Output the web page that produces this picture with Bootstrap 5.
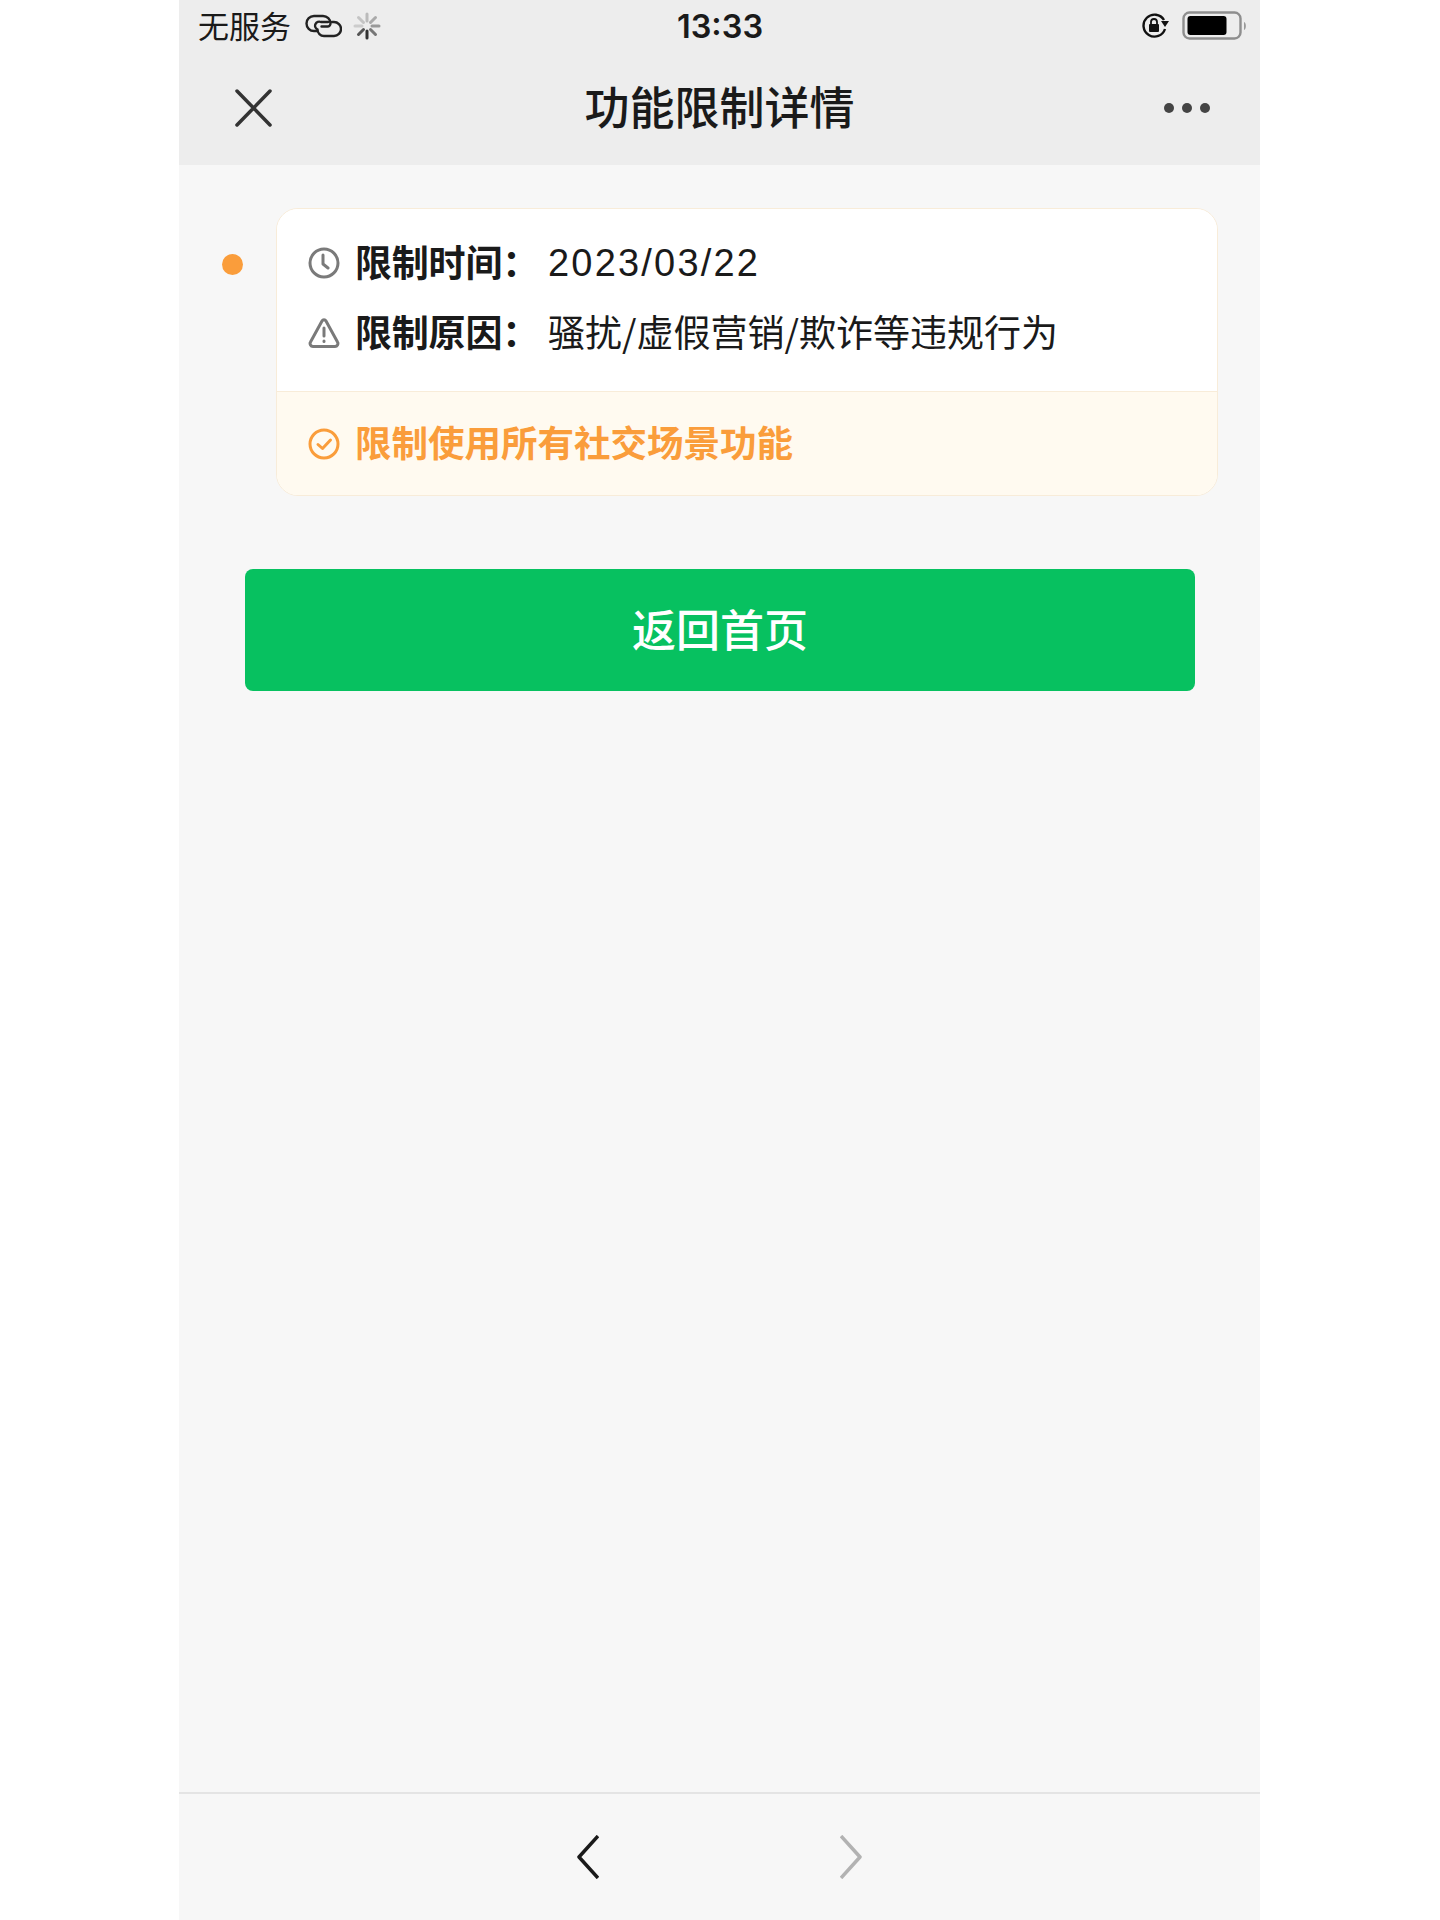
<!DOCTYPE html>
<html lang="zh-CN">
<head>
  <meta charset="UTF-8" />
  <meta name="viewport" content="width=device-width, initial-scale=1.0"/>
  <title>功能限制详情</title>
  <link href="https://cdn.jsdelivr.net/npm/bootstrap@5.3.2/dist/css/bootstrap.min.css" rel="stylesheet">
  <style>
    body { background: #fff; font-family: "Liberation Sans", "Noto Sans CJK SC", sans-serif; color: #1a1a1a; }
    .phone { width: 1081px; min-height: 1920px; margin-left: 179px; background: #f7f7f7; }
    .top-area { background: #ededed; }
    .status-bar { height: 52px; padding: 0 12px 0 19px; }
    .status-side { flex: 1 1 0; gap: 11px; }
    .status-text { font-size: 31px; line-height: 1; padding-bottom: 4px; margin-right: 3px; font-family: "Noto Sans CJK SC", sans-serif; }
    .status-time { font-size: 32.500px; font-weight: 600; line-height: 1; padding: 2px 6px 0 0; font-family: "Inter", "Liberation Sans", sans-serif; }
    .nav-row { height: 113px; padding: 0 50px 2px 56px; }
    .nav-side { width: 46px; }
    .nav-title { font-family: "Noto Sans CJK SC", sans-serif; font-size: 45px; font-weight: 500; line-height: 1; padding: 0 6px 5px 0; }
    .more-dot { width: 10px; height: 10px; border-radius: 50%; background: #444; }
    .page-body { padding: 43px 42px 0 43px; }
    .notice-dot { width: 21px; height: 21px; border-radius: 50%; background: #fa9d3b; margin-top: 46px; margin-right: 33px; }
    .notice-card { border-color: #f8ecd9; border-radius: 22px; overflow: hidden; }
    .notice-body { padding: 19px 30px 23px; }
    .info-row { height: 70px; font-family: "Noto Sans CJK SC", sans-serif; font-size: 37px; line-height: 1; }
    .info-icon { width: 32px; height: 32px; margin-right: 15px; margin-left: 1px; flex: none; }
    .info-label { width: 193px; font-weight: 700; flex: none; letter-spacing: -.2px; padding-bottom: 4px; }
    .info-value { font-weight: 400; padding-bottom: 4px; }
    .date-value { font-family: "Liberation Sans", sans-serif; font-size: 38px; letter-spacing: 2.200px; padding-bottom: 0; }
    .notice-foot { height: 104px; padding: 0 30px; background: #fffaf0; border-top: 1px solid #f8ecd9; color: #fa9d3b; font-family: "Noto Sans CJK SC", sans-serif; font-size: 36.500px; font-weight: 700; line-height: 1; }
    .foot-text { padding-bottom: 2px; }
    .back-btn { width: 950px; height: 122px; margin: 73px 0 0 66px; padding-bottom: 10px; border-radius: 8px; border: 0; font-family: "Noto Sans CJK SC", sans-serif; font-size: 44px; font-weight: 500; --bs-btn-bg: #07c160; --bs-btn-hover-bg: #07c160; --bs-btn-active-bg: #07c160; --bs-btn-color: #fff; }
    .bottom-bar { height: 128px; border-top: 2px solid #e4e4e4; padding-top: 41px; gap: 241px; }
  </style>
</head>
<body>
  <div class="phone d-flex flex-column">
    <div class="top-area">
      <!-- status bar -->
      <div class="status-bar d-flex align-items-center">
        <div class="status-side d-flex align-items-center">
          <span class="status-text">无服务</span>
          <svg width="37" height="24" viewBox="0 0 37 24" fill="none" stroke="#222" stroke-width="2.400" stroke-linecap="round">
            <path d="M12 17H9A7.500 7.500 0 0 1 9 2h9a7.500 7.500 0 0 1 7.500 7.500 3 3 0 0 1-3 3h-6"/>
            <path d="M27 8h2a6.500 6.500 0 0 1 0 14H19a6.500 6.500 0 0 1-6.500-6.500A3.500 3.500 0 0 1 16 8h7"/>
          </svg>
          <svg width="28" height="28" viewBox="0 0 28 28" stroke-width="3" stroke-linecap="round">
            <path d="M14 2v7" stroke="#bbb"/><path d="M22.500 5.500l-5 5" stroke="#aaa"/>
            <path d="M26 14h-7" stroke="#999"/><path d="M22.500 22.500l-5-5" stroke="#777"/>
            <path d="M14 26v-7" stroke="#333"/><path d="M5.500 22.500l5-5" stroke="#555"/>
            <path d="M2 14h7" stroke="#ccc"/><path d="M5.500 5.500l5 5" stroke="#c4c4c4"/>
          </svg>
        </div>
        <span class="status-time">13:33</span>
        <div class="status-side d-flex align-items-center justify-content-end">
          <svg width="30" height="26" viewBox="0 0 30 26" fill="none">
            <path d="M24 16a11 11 0 1 1-1-9" stroke="#111" stroke-width="2.400"/>
            <path d="M20 8h8l-4 6z" fill="#111"/>
            <rect x="8" y="11" width="10" height="8" rx="1" fill="#111"/>
            <path d="M10 11V9a3 3 0 0 1 6 0v2" stroke="#111" stroke-width="1.800"/>
          </svg>
          <svg width="66" height="30" viewBox="0 0 66 30" fill="none">
            <rect x="1.500" y="1.500" width="57" height="26" rx="6" stroke="#8e8e8e" stroke-width="2.400"/>
            <rect x="5.500" y="5" width="39" height="19" rx="3" fill="#000"/>
            <path d="M62 11c2.500 1 2.500 7 0 8z" fill="#999"/>
          </svg>
        </div>
      </div>
      <!-- title row -->
      <div class="nav-row d-flex align-items-center justify-content-between">
        <div class="nav-side">
          <svg class="d-block" width="37" height="38" viewBox="0 0 37 38" stroke="#333" stroke-width="3.500" stroke-linecap="round"><path d="M2 2l33 34M35 2L2 36"/></svg>
        </div>
        <div class="nav-title">功能限制详情</div>
        <div class="nav-side d-flex justify-content-between">
          <span class="more-dot"></span><span class="more-dot"></span><span class="more-dot"></span>
        </div>
      </div>
    </div>

    <div class="flex-grow-1">
      <div class="page-body d-flex align-items-start">
        <span class="notice-dot flex-shrink-0"></span>
        <div class="card notice-card flex-grow-1">
          <div class="notice-body bg-white">
            <div class="info-row d-flex align-items-center">
              <svg class="info-icon" viewBox="0 0 32 32" fill="none" stroke="#7a7a7a" stroke-width="3" stroke-linecap="round" stroke-linejoin="round"><circle cx="16" cy="16" r="14"/><path d="M15 8v9l5 4"/></svg>
              <span class="info-label">限制时间：</span>
              <span class="info-value date-value">2023/03/22</span>
            </div>
            <div class="info-row d-flex align-items-center">
              <svg class="info-icon" viewBox="0 0 32 32" fill="none" stroke="#7a7a7a" stroke-width="3" stroke-linejoin="round" stroke-linecap="round"><path d="M14 4L2.500 25a3 3 0 0 0 2.500 4.500h22a3 3 0 0 0 2.500-4.500L18 4a2.300 2.300 0 0 0-4 0z"/><path d="M16 11v8M16 24v.5"/></svg>
              <span class="info-label">限制原因：</span>
              <span class="info-value">骚扰/虚假营销/欺诈等违规行为</span>
            </div>
          </div>
          <div class="notice-foot d-flex align-items-center">
            <svg class="info-icon" viewBox="0 0 32 32" fill="none" stroke="#fa9d3b" stroke-width="3" stroke-linecap="round" stroke-linejoin="round"><circle cx="16" cy="16" r="14"/><path d="M10 16.500l4.500 4L22.500 12"/></svg>
            <span class="foot-text">限制使用所有社交场景功能</span>
          </div>
        </div>
      </div>
      <button type="button" class="btn back-btn d-block">返回首页</button>
    </div>

    <div class="bottom-bar d-flex justify-content-center align-items-start">
      <svg width="22" height="44" viewBox="0 0 22 44" fill="none" stroke="#1a1a1a" stroke-width="3.500"><path d="M21 1L2 22l19 21" stroke-linejoin="round"/></svg>
      <svg width="22" height="44" viewBox="0 0 22 44" fill="none" stroke="#b2b2b2" stroke-width="3.500"><path d="M1 1l19 21L1 43" stroke-linejoin="round"/></svg>
    </div>
  </div>
  <script src="https://cdn.jsdelivr.net/npm/bootstrap@5.3.2/dist/js/bootstrap.bundle.min.js"></script>
</body>
</html>
